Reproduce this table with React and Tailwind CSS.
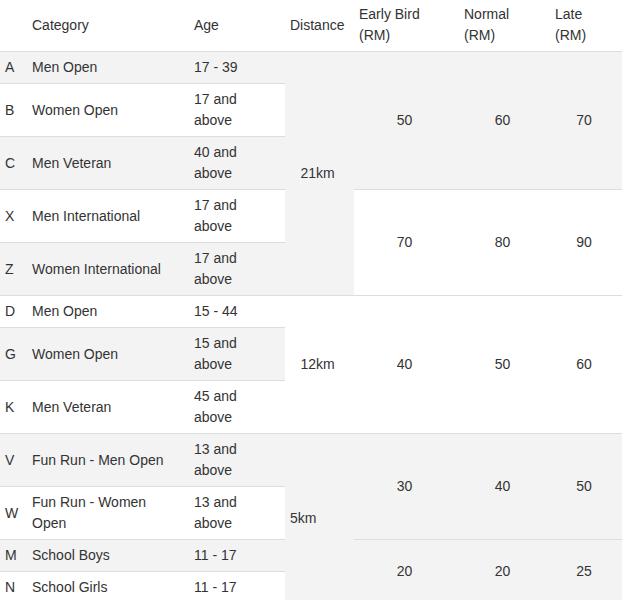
const groups = [
  {
    distance: '21km',
    distAlign: 'text-center',
    rows: [
      { code: 'A', cat: 'Men Open', age: ['17 - 39'] },
      { code: 'B', cat: 'Women Open', age: ['17 and', 'above'] },
      { code: 'C', cat: 'Men Veteran', age: ['40 and', 'above'] },
      { code: 'X', cat: 'Men International', age: ['17 and', 'above'] },
      { code: 'Z', cat: 'Women International', age: ['17 and', 'above'] },
    ],
    prices: [
      { span: 3, v: ['50', '60', '70'] },
      { span: 2, v: ['70', '80', '90'] },
    ],
  },
  {
    distance: '12km',
    distAlign: 'text-center',
    rows: [
      { code: 'D', cat: 'Men Open', age: ['15 - 44'] },
      { code: 'G', cat: 'Women Open', age: ['15 and', 'above'] },
      { code: 'K', cat: 'Men Veteran', age: ['45 and', 'above'] },
    ],
    prices: [{ span: 3, v: ['40', '50', '60'] }],
  },
  {
    distance: '5km',
    distAlign: 'text-left',
    rows: [
      { code: 'V', cat: ['Fun Run - Men Open'], age: ['13 and', 'above'] },
      { code: 'W', cat: ['Fun Run - Women', 'Open'], age: ['13 and', 'above'] },
      { code: 'M', cat: 'School Boys', age: ['11 - 17'] },
      { code: 'N', cat: 'School Girls', age: ['11 - 17'] },
    ],
    prices: [
      { span: 2, v: ['30', '40', '50'] },
      { span: 2, v: ['20', '20', '25'] },
    ],
  },
]

function Lines({ parts }) {
  if (!Array.isArray(parts)) return parts
  return parts.map((p, i) => (
    <span key={i}>
      {i > 0 && <br />}
      {p}
    </span>
  ))
}

const td = 'border-t border-[#dddddd] py-[5px] align-middle'

export default function App() {
  // flatten into table rows, tracking stripe index and rowspan starts
  const body = []
  let idx = 0
  groups.forEach((g, gi) => {
    let priceRow = 0
    const starts = {}
    g.prices.forEach((p) => {
      starts[priceRow] = p
      priceRow += p.span
    })
    g.rows.forEach((r, ri) => {
      const stripe = idx % 2 === 0 ? 'bg-[#f3f3f3]' : 'bg-white'
      const p = starts[ri]
      body.push(
        <tr key={`${gi}-${ri}`} className={stripe}>
          <td className={`${td} px-[5px]`}>{r.code}</td>
          <td className={`${td} px-[5px]`}><Lines parts={r.cat} /></td>
          <td className={`${td} px-[5px]`}><Lines parts={r.age} /></td>
          {ri === 0 && (
            <td rowSpan={g.rows.length} className={`${td} pl-[3px] pr-[7px] ${g.distAlign === 'text-left' ? 'pl-[5px]' : ''} ${g.distAlign}`}>
              {g.distance}
            </td>
          )}
          {p && p.v.map((v, vi) => (
            <td key={vi} rowSpan={p.span} className={`${td} pl-[3px] pr-[7px] text-center`}>{v}</td>
          ))}
        </tr>
      )
      idx++
    })
  })

  return (
    <div className="w-[622px] bg-white text-[#333333] text-[14px] leading-[21px] font-['Liberation_Sans',Arial,sans-serif]">
      <table className="w-[622px] table-fixed border-collapse">
        <colgroup>
          <col className="w-[27px]" />
          <col className="w-[162px]" />
          <col className="w-[96px]" />
          <col className="w-[69px]" />
          <col className="w-[105px]" />
          <col className="w-[91px]" />
          <col className="w-[72px]" />
        </colgroup>
        <thead>
          <tr className="border-b border-[#dddddd]">
            <th className="px-[5px] pt-[4px] pb-[5px] text-left font-normal align-middle"></th>
            <th className="px-[5px] pt-[4px] pb-[5px] text-left font-normal align-middle">Category</th>
            <th className="px-[5px] pt-[4px] pb-[5px] text-left font-normal align-middle">Age</th>
            <th className="px-[5px] pt-[4px] pb-[5px] text-left font-normal align-middle">Distance</th>
            <th className="px-[5px] pt-[4px] pb-[5px] text-left font-normal align-middle">Early Bird<br />(RM)</th>
            <th className="px-[5px] pt-[4px] pb-[5px] text-left font-normal align-middle">Normal<br />(RM)</th>
            <th className="px-[5px] pt-[4px] pb-[5px] text-left font-normal align-middle">Late<br />(RM)</th>
          </tr>
        </thead>
        <tbody>{body}</tbody>
      </table>
    </div>
  )
}
